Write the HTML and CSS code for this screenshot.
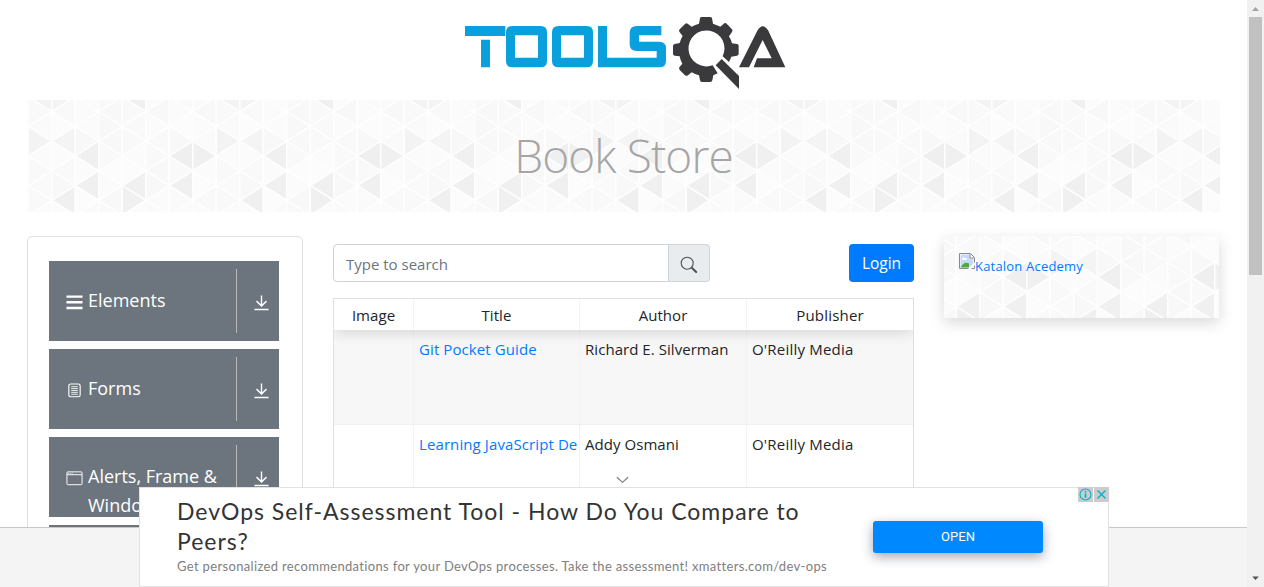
FILE: index.html
```html
<!DOCTYPE html>
<html lang="en">
<head>
<meta charset="utf-8">
<title>ToolsQA Book Store</title>
<link rel="stylesheet" href="styles.css">
</head>
<body>
<div class="window">
<div class="viewport">
<div class="page">
  <header class="site-header">
    <svg class="logo" viewBox="0 0 1050 270" role="img" aria-label="ToolsQA">
      <g fill="#0aa0de">
        <path d="M45 63H166V93H45ZM93 104H120V187H93Z"/>
        <path fill-rule="evenodd" d="M188 63H272Q291 63 291 82V168Q291 187 272 187H188Q168 187 168 168V82Q168 63 188 63ZM195 91V158H264V91Z"/>
        <path fill-rule="evenodd" d="M326 63H410Q429 63 429 82V168Q429 187 410 187H326Q306 187 306 168V82Q306 63 326 63ZM333 91V158H402V91Z"/>
        <path d="M444 63H471V158H620V138H560Q539 138 539 118V84Q539 63 560 63H634V91H567V110H628Q648 110 648 130V167Q648 187 628 187H444Z"/>
      </g>
      <g fill="#3a3a3c">
        <path fill-rule="evenodd" d="M750 40Q751 36 755 36H780Q785 36 786 40L789 56Q801 60 811 65L823 55Q827 53 830 56L846 73Q849 77 846 81L837 94Q843 104 846 115L861 117Q866 118 866 122V147Q866 151 861 152L844 155L837 171L818 154A54 54 0 1 0 788 181L803 205L790 211L787 226Q786 231 781 231H756Q751 231 750 226L747 211Q735 208 725 202L714 211Q709 214 705 211L689 195Q686 191 688 187L697 176Q691 166 689 154L674 152Q669 151 669 147V123Q669 118 674 117L689 114Q692 102 698 93L688 80Q686 76 689 73L705 57Q709 53 713 56L725 65Q736 59 747 56Z"/>
        <path d="M797 181L815 162L867 213V252Z"/>
        <path d="M867 187L922 77Q938 50 955 77L1006 187H911L921 160H965L938 105L897 187Z"/>
      </g>
    </svg>
  </header>
  <div class="banner">
    <svg class="triangles" data-shift="0 0"></svg>
    <h1 class="banner-title">Book Store</h1>
  </div>
  <div class="columns">
    <aside class="sidebar">
      <div class="group">
        <div class="group-label">
          <svg class="icon" viewBox="0 0 18 18"><path fill="#fff" d="M.5 2h17v2.6H.5zM.5 8h17v2.5H.5zM.5 14h17v2.6H.5z"/></svg>
          <span>Elements</span>
        </div>
        <div class="group-toggle"><svg class="down" viewBox="0 0 16 18"><path d="M8 1v11M2.7 7L8 12.2 13.3 7M.5 16h15"/></svg></div>
      </div>
      <div class="group">
        <div class="group-label">
          <svg class="icon" viewBox="0 0 18 18"><g fill="none" stroke="#fff"><rect x="3" y="2.6" width="12" height="13.6" rx="2" stroke-width="1.2"/><path stroke-width=".9" d="M5.5 5.5h7M5.5 7.5h7M5.5 9.5h7M5.5 11.5h7M5.5 13.5h7"/></g></svg>
          <span>Forms</span>
        </div>
        <div class="group-toggle"><svg class="down" viewBox="0 0 16 18"><path d="M8 1v11M2.7 7L8 12.2 13.3 7M.5 16h15"/></svg></div>
      </div>
      <div class="group">
        <div class="group-label">
          <svg class="icon" viewBox="0 0 18 18"><g fill="none" stroke="#fff"><rect x="1" y="2.5" width="16" height="13.6" rx="1"/><path d="M1 5.5h16"/><path stroke-dasharray="1 1" d="M2 4h6"/></g></svg>
          <span>Alerts, Frame &amp; Windows</span>
        </div>
        <div class="group-toggle"><svg class="down" viewBox="0 0 16 18"><path d="M8 1v11M2.7 7L8 12.2 13.3 7M.5 16h15"/></svg></div>
      </div>
      <div class="group"></div>
    </aside>
    <main class="books">
      <div class="toolbar">
        <div class="search">
          <div class="search-input">Type to search</div>
          <div class="search-button"><svg viewBox="0 0 18 18" width="18" height="18"><g fill="none" stroke="#495057"><circle cx="7.2" cy="7.2" r="6" stroke-width="1.1"/><path stroke-width="2" stroke-linecap="round" d="M12 12l4.2 4"/></g></svg></div>
        </div>
        <div class="login">Login</div>
      </div>
      <div class="table">
        <div class="row head"><div>Image</div><div>Title</div><div>Author</div><div>Publisher</div></div>
        <div class="row odd"><div></div><div><a>Git Pocket Guide</a></div><div>Richard E. Silverman</div><div>O'Reilly Media</div></div>
        <div class="row"><div></div><div><a>Learning JavaScript De</a></div><div>Addy Osmani</div><div>O'Reilly Media</div></div>
      </div>
    </main>
    <aside class="promo">
      <svg class="triangles" data-shift="-83 -15"></svg>
      <div class="promo-link">
        <svg width="16" height="16" viewBox="0 0 16 16"><path fill="#fff" stroke="#8b8b8b" d="M.5 .5h11l4 4v11H.5z"/><path fill="#c5d9f8" d="M1.5 1.5h9.5v4h3.5v9h-13z"/><path fill="#fff" d="M3 6q1-3 3-1 2 0 2 2H3z"/><path fill="#53a93f" d="M1.5 14.500Q5 8 10 10.500V14.500z"/><path fill="#fff" d="M9 16l7-7v3l-4 4z"/><path fill="none" stroke="#8b8b8b" d="M11 1v4h4"/></svg><span>Katalon Acedemy</span>
      </div>
    </aside>
  </div>
</div>
<footer class="footer"></footer>
<svg class="chevron" viewBox="0 0 14 8"><path d="M1 1l6 5.500L13 1" fill="none" stroke="#777" stroke-width="1.200"/></svg>
<section class="ad">
  <div class="ad-copy">
    <div class="ad-title">DevOps Self-Assessment Tool - How Do You Compare to<br>Peers?</div>
    <div class="ad-text">Get personalized recommendations for your DevOps processes. Take the assessment! xmatters.com/dev-ops</div>
  </div>
  <div class="ad-open">OPEN</div>
  <div class="ad-marks">
    <svg viewBox="0 0 15 15"><g fill="none" stroke="#00aecd"><circle cx="7.500" cy="7.500" r="5.500" stroke-width="1.100"/><path stroke-width="1.600" d="M7.500 6.500v4.200M7.500 4v1.500"/></g></svg>
    <svg viewBox="0 0 15 15"><path stroke="#00aecd" stroke-width="1.300" d="M3.500 3.500l8 8M11.500 3.500l-8 8"/></svg>
  </div>
</section>
</div>
<div class="scrollbar">
  <svg viewBox="0 0 17 17"><path fill="#a3a3a3" d="M5 11l3.500-4 3.500 4z"/></svg>
  <div class="thumb"></div>
  <svg class="scroll-down" viewBox="0 0 17 17"><path fill="#505050" d="M5.300 6.500h6.500L8.500 10z"/></svg>
</div>
</div>
<script src="triangles.js"></script>
</body>
</html>
```
FILE: styles.css
```css
* { box-sizing: border-box; }
body { margin: 0; background: #fff; color: #212529; font-family: "Open Sans", "Noto Sans", sans-serif; font-size: 15px; overflow: hidden; }
.window { display: flex; height: 587px; }
.viewport { position: relative; width: 1247px; height: 587px; overflow: hidden; }
.page { height: 528px; padding: 0 27px; overflow: hidden; border-bottom: 1px solid #c8c8c8; }
.footer { height: 59px; background: #f4f4f4; }
.site-header { height: 100px; padding: 5px 0 0 423px; }
.logo { display: block; width: 350px; height: 90px; }
.banner { position: relative; height: 112px; padding-bottom: 3px; display: flex; justify-content: center; align-items: center; overflow: hidden; }
.triangles { position: absolute; inset: 0; width: 100%; height: 100%; }
.banner-title { position: relative; margin: 0; font-weight: 300; font-size: 46px; line-height: 60px; letter-spacing: -.9px; color: #a6a6a6; }
.columns { display: grid; grid-template-columns: 276px 581px 275px; column-gap: 30px; align-items: start; padding-top: 24px; }
.sidebar { height: 400px; padding: 24px 23px 0 21px; border: 1px solid #dfdfdf; border-radius: 5px; display: flex; flex-direction: column; gap: 8px; }
.group { flex: none; height: 80px; padding: 8px 0; display: flex; background: #6c757d; color: #fff; }
.group-label { width: 188px; height: 64px; padding: 17px 0 0 17px; display: flex; gap: 5px; border-right: 1px solid #b9b9b5; font-size: 18px; line-height: 29px; }
.icon { flex: none; width: 17px; height: 18px; margin-top: 7px; }
.group-toggle { padding: 25px 0 0 17px; }
.down { display: block; width: 15px; height: 18px; fill: none; stroke: #fff; stroke-width: 1.5; }
.toolbar { display: flex; justify-content: space-between; height: 38px; margin-top: 8px; }
.search { display: flex; width: 377px; }
.search-input { flex: 1; padding: 0 12px; border: 1px solid #ced4da; border-radius: 4px 0 0 4px; line-height: 39px; color: #6c757d; }
.search-button { width: 41px; padding: 11px 0 0 11px; background: #e9ecef; border: 1px solid #ced4da; border-left: 0; border-radius: 0 4px 4px 0; }
.login { width: 65px; background: #007bff; border-radius: 4px; color: #fff; text-align: center; line-height: 39px; font-size: 15.500px; }
.table { height: 300px; margin-top: 16px; border: 1px solid #e0e0e0; }
.row { display: grid; grid-template-columns: 80px 166px 167px 166px; height: 95px; border-bottom: 1px solid #f0f0f0; white-space: nowrap; }
.row > div { padding: 7px 0 0 5px; line-height: 24px; overflow: hidden; border-right: 1px solid #f3f3f3; letter-spacing: .05px; }
.row > div:last-child { border-right: 0; letter-spacing: .2px; }
.row.odd { background: #f7f7f7; }
.row.head { position: relative; height: 31px; background: #fff; border: 0; text-align: center; box-shadow: 0 2px 15px rgba(0,0,0,.15); clip-path: inset(0 0 -20px 0); }
.row.head > div { padding: 4px 0 0; }
.row a { color: #007bff; letter-spacing: .1px; }
.promo { position: relative; height: 82px; padding: 17px 15px; box-shadow: 0 5px 14px rgba(0,0,0,.15); }
.promo-link { position: relative; display: flex; color: #007bff; font-size: 13px; line-height: 27px; letter-spacing: .2px; }
.chevron { position: absolute; left: 616px; top: 476px; width: 13px; height: 8px; }
.ad { position: absolute; left: 139px; top: 487px; width: 970px; height: 100px; background: #fff; border: 1px solid #e2e2e2; display: flex; padding-left: 37px; }
.ad-copy { width: 696px; padding-top: 8px; white-space: nowrap; font-family: Lato, sans-serif; }
.ad-title { font-size: 23px; line-height: 30px; letter-spacing: .98px; color: #333; }
.ad-text { font-size: 13px; line-height: 20px; color: #808080; letter-spacing: .34px; }
.ad-open { width: 170px; height: 32px; margin-top: 33px; border-radius: 3px; background: #08f; color: #fff; box-shadow: 0 4px 12px rgba(20,40,80,.4); font: 400 13px/32px Roboto, sans-serif; text-align: center; }
.ad-marks { position: absolute; right: -1px; top: -1px; display: flex; gap: 1px; }
.ad-marks svg { display: block; width: 15px; height: 15px; background: #ccc; }
.scrollbar { width: 17px; height: 587px; background: #f1f1f1; display: flex; flex-direction: column; align-items: center; }
.scrollbar svg { display: block; width: 17px; height: 17px; }
.thumb { width: 13px; height: 258px; background: #c1c1c1; }
.scrollbar .scroll-down { margin-top: auto; }
```
FILE: triangles.js
```js
// Shades of one tile: eight vertical strips, nine triangles in each.
const strips = [
  'f3 f9 fa f3 fb f9 fa f9 fb', 'f4 f9 fc f4 fb f9 f8 f0 fb',
  'fb fb fb f8 f0 fb f0 fc fa', 'f9 f8 f8 f8 f9 fc fb f8 f9',
  'f0 f9 f9 f9 fb fc f0 f0 fb', 'fb f8 fb f9 f9 f8 f8 fb fa',
  'fa fb fc f8 ef f9 f0 fa fb', 'fa f8 fb fa f0 fb fc f9 fb'
].map(s => s.split(' '));
const stripWidth = 23.5, rowStep = 14.8;
document.querySelectorAll('.triangles').forEach(svg => {
  const [dx, dy] = svg.dataset.shift.split(' ').map(Number);
  let shapes = '';
  for (let k = -1; k < 60; k++) {
    strips[(k + 8) % 8].forEach((shade, r) => {
      const x = dx + 1.3 + k * stripWidth, y = dy - 3.2 + r * rowStep;
      const pointsRight = (k + 8 + r) % 2 === 1;
      const base = pointsRight ? x : x + stripWidth;
      const apex = pointsRight ? x + stripWidth : x;
      shapes += `<path fill="#${shade.repeat(3)}" d="M${base} ${y - rowStep}V${y + rowStep}L${apex} ${y}Z"/>`;
    });
  }
  svg.innerHTML = `<g stroke="#fefefe" stroke-width="1.4" stroke-linejoin="round">${shapes}</g>`;
});
```
